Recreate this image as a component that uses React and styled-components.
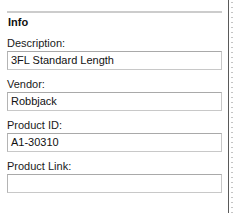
import React from "react";
import styled, { createGlobalStyle } from "styled-components";

const Global = createGlobalStyle`
  html, body { margin: 0; padding: 0; background: #ffffff; }
  body { font-family: "Liberation Sans", Tahoma, Arial, sans-serif; }
`;

const Page = styled.div`
  display: flex;
  width: 233px;
  height: 213px;
  overflow: hidden;
  background: #ffffff;
`;

const Panel = styled.div`
  width: 229px;
  box-sizing: border-box;
  border-right: 1px solid #5a5a5a;
  padding: 11px 0 0 7px;
  display: flex;
  flex-direction: column;
`;

const Gutter = styled.div`
  flex: 1;
  background-image: repeating-linear-gradient(
    to bottom,
    #c4c4c4 0px,
    #c4c4c4 1px,
    transparent 1px,
    transparent 5px
  );
  background-size: 2px 100%;
  background-repeat: no-repeat;
  background-position: 2px 2px;
`;

const Rule = styled.div`
  width: 215px;
  height: 2px;
  background: #cccccc;
`;

const Heading = styled.div`
  font-size: 11px;
  font-weight: bold;
  color: #111;
  margin: 3px 0 0 1px;
  line-height: 13px;
`;

const Field = styled.div`
  display: flex;
  flex-direction: column;
  margin-top: 8px;
`;

const Label = styled.div`
  font-size: 11px;
  color: #1a1a1a;
  line-height: 13px;
  margin-bottom: 1px;
`;

const Input = styled.div`
  width: 215px;
  height: 19px;
  box-sizing: border-box;
  border: 1px solid #c8c8c8;
  border-top-color: #a9a9a9;
  border-left-color: #b4b4b4;
  padding: 0 0 0 3px;
  font-size: 11px;
  line-height: 17px;
  color: #111;
  background: #fff;
`;

const fields = [
  { label: "Description:", value: "3FL Standard Length" },
  { label: "Vendor:", value: "Robbjack" },
  { label: "Product ID:", value: "A1-30310" },
  { label: "Product Link:", value: "" },
];

export default function App() {
  return (
    <Page>
      <Global />
      <Panel>
        <Rule />
        <Heading>Info</Heading>
        {fields.map((f) => (
          <Field key={f.label}>
            <Label>{f.label}</Label>
            <Input>{f.value}</Input>
          </Field>
        ))}
      </Panel>
      <Gutter />
    </Page>
  );
}
